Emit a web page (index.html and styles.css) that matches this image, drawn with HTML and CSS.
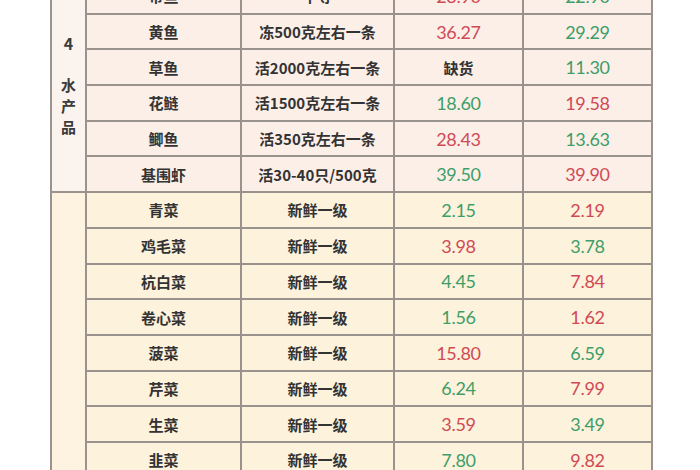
FILE: index.html
```html
<!DOCTYPE html>
<html lang="zh">
<head>
<meta charset="utf-8">
<title>价格表</title>
<link rel="stylesheet" href="styles.css">
</head>
<body>
<div class="frame">
<table class="prices">
<colgroup>
<col class="c-cat"><col class="c-name"><col class="c-spec"><col class="c-p1"><col class="c-p2">
</colgroup>
<tbody class="fish">
<tr><td class="cat" rowspan="6"><span class="num">4</span><span class="vert">水<br>产<br>品</span></td><td class="name">带鱼</td><td class="spec">中等</td><td class="up">23.90</td><td class="down">22.90</td></tr>
<tr><td class="name">黄鱼</td><td class="spec">冻500克左右一条</td><td class="up">36.27</td><td class="down">29.29</td></tr>
<tr><td class="name">草鱼</td><td class="spec">活2000克左右一条</td><td class="spec">缺货</td><td class="down">11.30</td></tr>
<tr><td class="name">花鲢</td><td class="spec">活1500克左右一条</td><td class="down">18.60</td><td class="up">19.58</td></tr>
<tr><td class="name">鲫鱼</td><td class="spec">活350克左右一条</td><td class="up">28.43</td><td class="down">13.63</td></tr>
<tr><td class="name">基围虾</td><td class="spec">活30-40只/500克</td><td class="down">39.50</td><td class="up">39.90</td></tr>
</tbody>
<tbody class="veg">
<tr><td class="cat" rowspan="8"></td><td class="name">青菜</td><td class="spec">新鲜一级</td><td class="down">2.15</td><td class="up">2.19</td></tr>
<tr><td class="name">鸡毛菜</td><td class="spec">新鲜一级</td><td class="up">3.98</td><td class="down">3.78</td></tr>
<tr><td class="name">杭白菜</td><td class="spec">新鲜一级</td><td class="down">4.45</td><td class="up">7.84</td></tr>
<tr><td class="name">卷心菜</td><td class="spec">新鲜一级</td><td class="down">1.56</td><td class="up">1.62</td></tr>
<tr><td class="name">菠菜</td><td class="spec">新鲜一级</td><td class="up">15.80</td><td class="down">6.59</td></tr>
<tr><td class="name">芹菜</td><td class="spec">新鲜一级</td><td class="down">6.24</td><td class="up">7.99</td></tr>
<tr><td class="name">生菜</td><td class="spec">新鲜一级</td><td class="up">3.59</td><td class="down">3.49</td></tr>
<tr><td class="name">韭菜</td><td class="spec">新鲜一级</td><td class="down">7.80</td><td class="up">9.82</td></tr>
</tbody>
</table>
</div>
</body>
</html>
```
FILE: styles.css
```css
html, body {
  margin: 0;
  padding: 0;
  background: #ffffff;
  overflow: hidden;
  height: 470px;
}
.frame {
  width: 700px;
  height: 470px;
  overflow: hidden;
}
.prices {
  margin: -23px 0 0 50px;
  width: 601px;
  border-collapse: collapse;
  table-layout: fixed;
  border-left: 2px solid #6f6a66;
  border-right: 2px solid #6f6a66;
  font-family: "Noto Sans CJK SC", "Noto Sans", sans-serif;
}
.c-cat { width: 35px; }
.c-name { width: 155px; }
.c-spec { width: 153px; }
.c-p1 { width: 129px; }
.c-p2 { width: 129px; }
.prices td {
  border: 2px solid #9a938d;
  height: 35.7px;
  padding: 0;
  text-align: center;
  vertical-align: middle;
  box-sizing: border-box;
}
.fish td { background: #fcefe8; }
.veg td { background: #fdf2dc; }
.fish td.cat { background: #fbf3ee; }
.veg td.cat { background: #fdf3e0; }
.veg tr:first-child td { border-top-color: #807a75; }
.cat {
  color: #3a3a3a;
  font-size: 15px;
  font-weight: 600;
  line-height: 21px;
}
.cat .num {
  display: block;
  font-size: 16px;
  margin-bottom: 20px;
}
.cat .vert { display: block; }
.name, .spec {
  color: #333333;
  font-size: 15px;
  font-weight: 600;
}
.up, .down {
  font-family: "Lato", "Open Sans", sans-serif;
  font-size: 18px;
  letter-spacing: -0.3px;
}
.up { color: #d04a55; }
.down { color: #3d9e68; }
```
